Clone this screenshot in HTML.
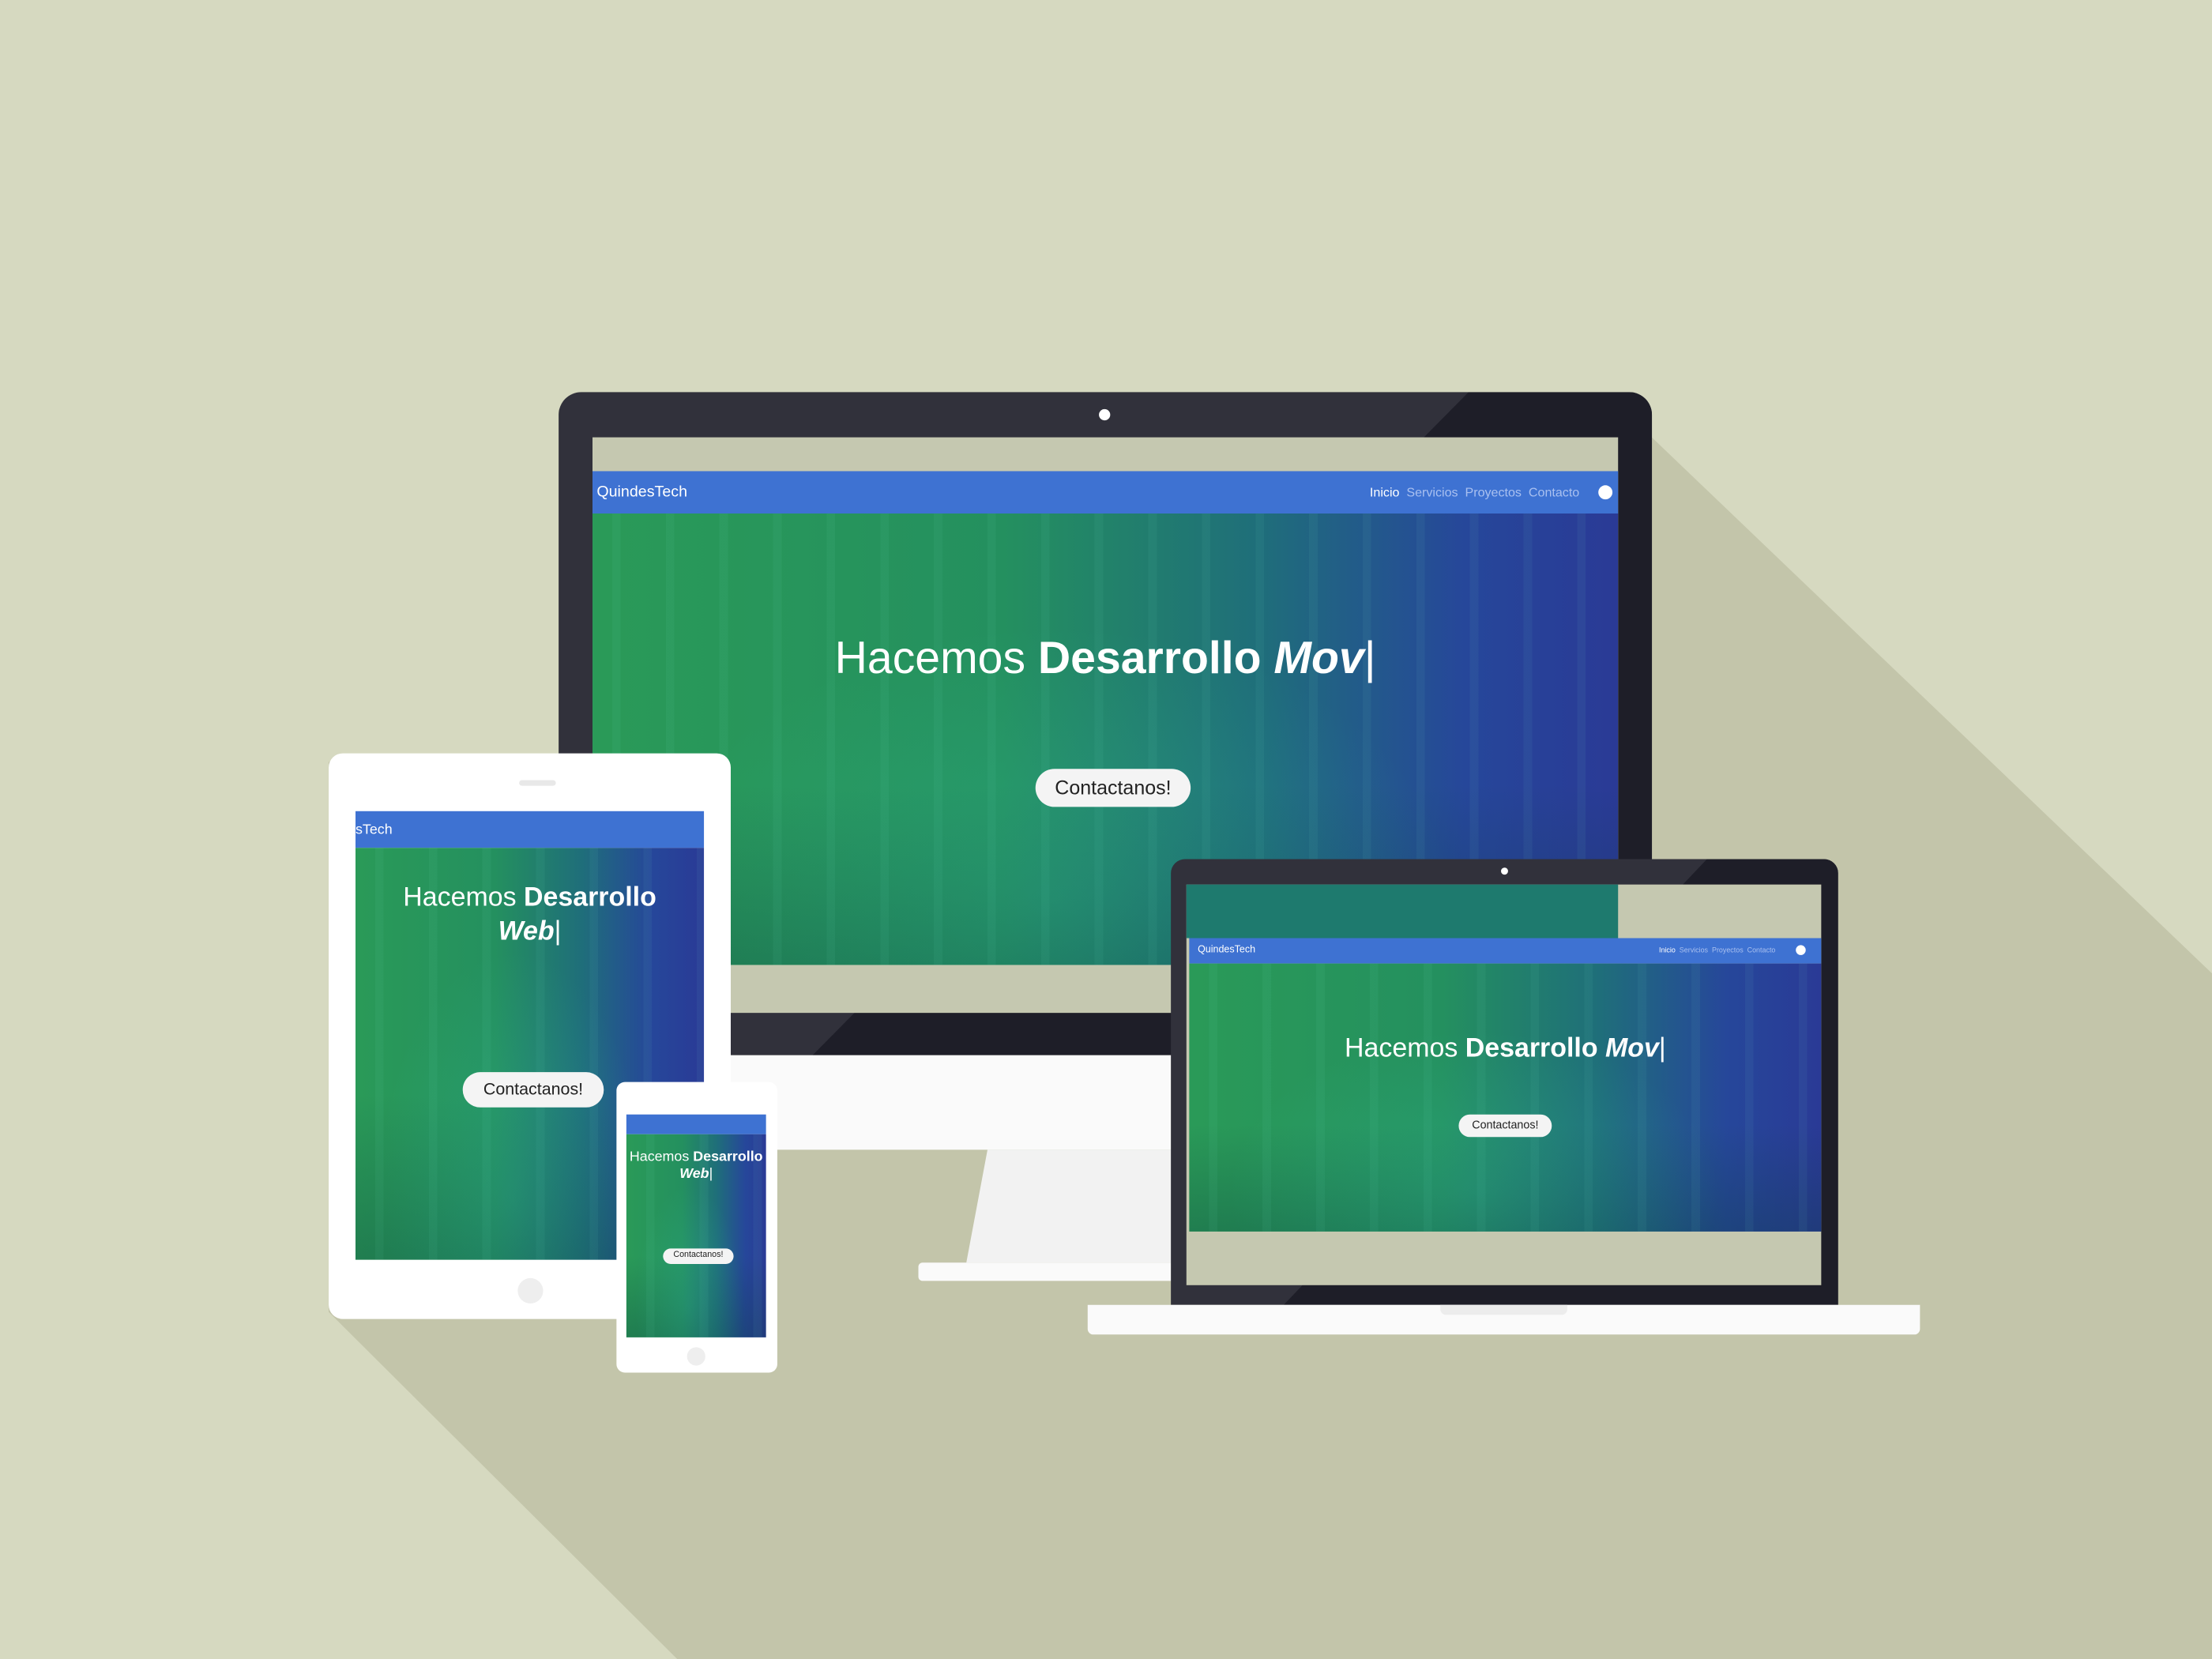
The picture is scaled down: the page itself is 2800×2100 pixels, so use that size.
<!DOCTYPE html>
<html><head><meta charset="utf-8"><style>
*{margin:0;padding:0;box-sizing:border-box}
html,body{width:2800px;height:2100px;overflow:hidden;background:#d6d9c0}
#s{position:absolute;left:0;top:0;width:1568px;height:1176px;transform:scale(1.785714);transform-origin:0 0;font-family:"Liberation Sans",sans-serif}
.a{position:absolute}
.hero{background:linear-gradient(90deg,#2a9a58 0%,#24905f 40%,#1f6e7a 65%,#26479a 85%,#2a3a96 100%);overflow:hidden}
.hero:before{content:"";position:absolute;inset:0;background:radial-gradient(ellipse at 45% 85%,rgba(60,220,190,.18),rgba(0,0,0,0) 50%),repeating-linear-gradient(90deg,rgba(255,255,255,0) 0 14px,rgba(120,230,200,.06) 14px 20px,rgba(255,255,255,0) 20px 38px),linear-gradient(180deg,rgba(0,0,0,0) 60%,rgba(10,60,60,.3) 100%)}
.nav{background:#3e72d2;color:#fff}
.btn{position:absolute;background:#f4f4f4;color:#222;border-radius:20px;text-align:center}
.h{position:absolute;color:#fff;text-align:center;width:100%}
</style></head><body><div id="s">
<svg class="a" style="left:0;top:0" width="1568" height="1176"><polygon points="1150,290 1568,690 1568,1176 480,1176 233,930 233,540 396,540 396,290" fill="#c3c5aa"/></svg>
<!-- monitor -->
<div class="a" style="left:396px;top:278px;width:775px;height:470px;background:#31313b;border-radius:16px 16px 0 0;overflow:hidden"><svg width="775" height="470" style="position:absolute"><polygon points="645,0 775,0 775,470 180,470" fill="#1e1e28"/></svg></div>
<div class="a" style="left:779px;top:290px;width:8px;height:8px;border-radius:50%;background:#fff"></div>
<div class="a" style="left:420px;top:310px;width:727px;height:408px;background:#c5c8b0"></div>
<div class="a nav" style="left:420px;top:334px;width:727px;height:30px;font-size:11px"><span class="a" style="left:3px;top:9px">QuindesTech</span><span class="a" style="left:551px;top:10px;font-size:9px">Inicio <span style="color:#a9c0f0">&nbsp;Servicios &nbsp;Proyectos &nbsp;Contacto</span></span><span class="a" style="left:713px;top:10px;width:10px;height:10px;border-radius:50%;background:#fff"></span></div>
<div class="a hero" style="left:420px;top:364px;width:727px;height:320px"><div class="h" style="top:84px;font-size:32px">Hacemos <b>Desarrollo</b> <b><i>Mov</i></b>|</div><div class="btn" style="left:314px;top:181px;width:110px;height:27px;line-height:27px;font-size:14px">Contactanos!</div></div>
<div class="a" style="left:396px;top:748px;width:775px;height:67px;background:#fafafa"></div>
<svg class="a" style="left:640px;top:815px" width="290" height="95"><polygon points="60,0 230,0 245,80 45,80" fill="#f2f2f2"/><rect x="11" y="80" width="265" height="13" rx="3" fill="#fafafa"/></svg>
<!-- tablet -->
<div class="a" style="left:233px;top:534px;width:285px;height:401px;background:#fff;border-radius:10px"></div>
<div class="a" style="left:368px;top:553px;width:26px;height:4px;border-radius:2px;background:#e8e8e8"></div>
<div class="a" style="left:367px;top:906px;width:18px;height:18px;border-radius:50%;background:#eee"></div>
<div class="a nav" style="left:252px;top:575px;width:247px;height:26px;font-size:10px"><span class="a" style="left:0;top:8px">sTech</span></div>
<div class="a hero" style="left:252px;top:601px;width:247px;height:292px"><div class="h" style="top:24px;font-size:19px;line-height:24px">Hacemos <b>Desarrollo</b><br><b><i>Web</i></b>|</div><div class="btn" style="left:76px;top:159px;width:100px;height:25px;line-height:25px;font-size:12px">Contactanos!</div></div>
<!-- phone -->
<div class="a" style="left:437px;top:767px;width:114px;height:206px;background:#fff;border-radius:6px"></div>
<div class="a" style="left:487px;top:955px;width:13px;height:13px;border-radius:50%;background:#eee"></div>
<div class="a nav" style="left:444px;top:790px;width:99px;height:14px"></div>
<div class="a hero" style="left:444px;top:804px;width:99px;height:144px"><div class="h" style="top:11px;font-size:10px;line-height:12px">Hacemos <b>Desarrollo</b><br><b><i>Web</i></b>|</div><div class="btn" style="left:26px;top:81px;width:50px;height:11px;line-height:11px;font-size:6px">Contactanos!</div></div>
<!-- laptop -->
<div class="a" style="left:830px;top:609px;width:473px;height:316px;background:#31313b;border-radius:10px 10px 0 0;overflow:hidden"><svg width="473" height="316" style="position:absolute"><polygon points="380,0 473,0 473,316 80,316" fill="#1e1e28"/></svg></div>
<div class="a" style="left:1064px;top:615px;width:5px;height:5px;border-radius:50%;background:#fff"></div>
<div class="a" style="left:841px;top:627px;width:450px;height:284px;background:#c5c8b0"></div>
<div class="a" style="left:841px;top:627px;width:306px;height:38px;background:#1e7a6e"></div>
<div class="a nav" style="left:843px;top:665px;width:448px;height:18px;font-size:7px"><span class="a" style="left:6px;top:5px">QuindesTech</span><span class="a" style="left:333px;top:6px;font-size:5px">Inicio <span style="color:#a9c0f0">&nbsp;Servicios &nbsp;Proyectos &nbsp;Contacto</span></span><span class="a" style="left:430px;top:5px;width:7px;height:7px;border-radius:50%;background:#fff"></span></div>
<div class="a hero" style="left:843px;top:683px;width:448px;height:190px"><div class="h" style="top:50px;font-size:19px">Hacemos <b>Desarrollo</b> <b><i>Mov</i></b>|</div><div class="btn" style="left:191px;top:107px;width:66px;height:16px;line-height:16px;font-size:8px">Contactanos!</div></div>
<div class="a" style="left:771px;top:925px;width:590px;height:21px;background:#fafafa;border-radius:0 0 4px 4px"></div>
<div class="a" style="left:1021px;top:925px;width:90px;height:7px;background:#ececec;border-radius:0 0 4px 4px"></div>
</div></body></html>
